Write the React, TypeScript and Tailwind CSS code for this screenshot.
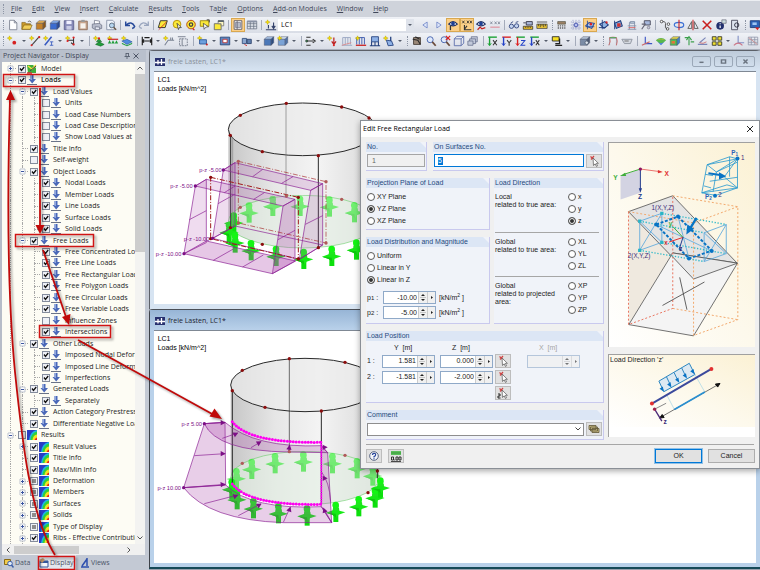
import { useState, type ReactNode } from "react";

/* ---------- toolbar glyphs, drawn on a 14 x 14 grid ---------- */

const spark = <path d="M3 1l1 2 2 .6-2 .8-1 2-.9-2L.3 3.600l1.800-.6z" fill="#f4e000" stroke="#b59a00" strokeWidth=".5" />;
const lens = (
  <g>
    <circle cx="6" cy="5.500" r="3.500" fill="#dfe9fb" stroke="#3c5aa8" />
    <path d="M8.500 8l4 4.500" stroke="#6a4a3a" strokeWidth="2" />
  </g>
);
const eye = (
  <g>
    <path d="M2 6q5-6 10 0-5 4-10 0z" fill="#fff" stroke="#1d2f63" strokeWidth="1.400" />
    <circle cx="7" cy="5.500" r="2.200" fill="#1d3f95" />
  </g>
);
const axis = (up: string, side: string) => (
  <g fill="none" strokeWidth="1.600">
    <path d="M1.500 2.500h10" stroke={side} />
    <path d="M3 2.500v9.500" stroke={up} />
    <path d="M1 9.500l2 3 2-3" stroke={up} strokeWidth="1" />
  </g>
);
const gridLines = (c: string) => (
  <path d="M1.500 2.500h11v9h-11zM1.500 5.500h11M1.500 8.500h11M5 2.500v9M9 2.500v9" fill="none" stroke={c} strokeWidth=".9" />
);
const cube = (a: string, b: string, c: string) => (
  <g stroke="#40475e" strokeWidth=".5">
    <path d="M1.500 5l3-3h8l-3 3z" fill={a} />
    <path d="M1.500 5h8v7h-8z" fill={b} />
    <path d="M9.500 5l3-3v7l-3 3z" fill={c} />
  </g>
);

const glyphs: Record<string, ReactNode> = {
  "New": <path d="M3 1.500h5.500l3 3v8H3zM8.500 1.500v3h3" fill="#fff" stroke="#7b8190" />,
  "Open": <g stroke="#7a5c10" strokeWidth=".7"><path d="M1 12V4h4l1 1.500h5V12z" fill="#c9982c" /><path d="M1 12l2.500-5H13l-2 5z" fill="#f2cf5b" /><path d="M8 3q3-2 4 1" fill="none" stroke="#333" /></g>,
  "Project manager": cube("#e8b050", "#c5822a", "#8d5716"),
  "Block manager": cube("#86aef0", "#3c6cd0", "#264795"),
  "Save": <g><path d="M1.500 2h11v10.500h-11z" fill="#8589b8" stroke="#5b5f8c" /><path d="M4 2h6v4H4z" fill="#eef" /><path d="M4 8h6v4.500H4z" fill="#c8cbe4" /></g>,
  "Clipboard": <g><path d="M2 2.500h10v10H2z" fill="#c8a58c" stroke="#8a6b58" /><path d="M4 5h6v6H4z" fill="#f7f3ee" /><path d="M5 1h4v2.500H5z" fill="#999" /></g>,
  "Print": <g stroke="#666c80" strokeWidth=".8"><path d="M4 1.500l6 1v4H4z" fill="#fff" /><path d="M1.500 6l8-1 3 2v4l-7 1.500-4-2z" fill="#b7bccb" /><path d="M5 9l5 .5v3H5z" fill="#e6e9f3" /></g>,
  "Preview": <g><path d="M2 1.500h7l2 2v9H2z" fill="#eef3fb" stroke="#8790a5" /><circle cx="8" cy="7.500" r="2.800" fill="#b6d5ef" stroke="#567" /><path d="M10 9.500l3 3" stroke="#654" strokeWidth="1.600" /></g>,
  "Undo": <path d="M2 3v4.500h5M2.500 7q6-5.500 10 1.500-.5 2-3 2.500" fill="none" stroke="#274a9a" strokeWidth="1.700" />,
  "Redo": <path d="M12 3v4.500H7M11.500 7q-6-5.500-10 1.500.5 2 3 2.500" fill="none" stroke="#9aa6bf" strokeWidth="1.500" />,
  "Select area": <g><path d="M4 2h8L9.500 10h-8z" fill="#fbe93a" stroke="#222" /><path d="M2 12.500l9-9" stroke="#c22" /></g>,
  "Select circle": <g><circle cx="7" cy="6" r="4.500" fill="#fbe93a" stroke="#b08a00" /><path d="M7 5l5 5-2.300 0-1 2.300z" fill="#fff" stroke="#222" strokeWidth=".8" /></g>,
  "Select ring": <g><circle cx="7" cy="6.500" r="5" fill="#fbe93a" stroke="#b03a00" /><circle cx="7" cy="6.500" r="2" fill="none" stroke="#444" strokeWidth="1.500" /><path d="M9 11l2 2" stroke="#c22" strokeWidth="1.500" /></g>,
  "Select window": <g><path d="M1.500 2h10v6.500h-10z" fill="#fbe93a" stroke="#998300" /><path d="M5 5l1 7 2-2.500 3-.5z" fill="#fff" stroke="#333" strokeWidth=".8" /><path d="M9 1h3v3" fill="none" stroke="#333" /></g>,
  "New window": <g><path d="M1.500 5.500h8v7h-8z" fill="#fbe93a" stroke="#666" /><path d="M6 2h6.500v6H9.500V5.500H6z" fill="#fff8c0" stroke="#777" /><path d="M6 2.500h6.500" stroke="#345" strokeWidth="1.500" /></g>,
  "Navigator": <g><path d="M2.500 2h9v10h-9z" fill="#fff" stroke="#556" /><path d="M4 4h6v6H4z" fill="#b7bcc9" stroke="#778" strokeWidth=".8" /><path d="M6 2v10" stroke="#667" /></g>,
  "Tables": <g>{gridLines("#6a7283")}<path d="M1.500 2h11v2h-11z" fill="#8992a5" /></g>,
  "Load case": <g>{spark}<path d="M10 4v6M8 8l2 3 2-3M1 12.500h12M4 7v4" stroke="#34426b" fill="none" strokeWidth="1.300" /></g>,
  "Previous": <path d="M9.500 3.500L4.500 7l5 3.500z" fill="#dfe7fb" stroke="#7489c8" />,
  "Next": <path d="M4.500 3.500l5 3.500-5 3.500z" fill="#dfe7fb" stroke="#7489c8" />,
  "Show loads": <g>{eye}<path d="M4 8v5" stroke="#333" strokeWidth="1.500" /></g>,
  "Show values": <g><path d="M1.500 2l2.500 3M4 2L1.500 5M5.500 5v.3M7 2l2.200 3M9.200 2L7 5M10.500 2l2.200 3M12.700 2l-2.200 3" stroke="#222" strokeWidth=".9" /><path d="M4 7v5.500h8M4 12l3-4" stroke="#333" fill="none" strokeWidth="1.300" /></g>,
  "Show results": <g>{eye}<path d="M3 12.500l3-3 2 2 4-1.500" stroke="#c21f1f" fill="none" strokeWidth="1.400" /></g>,
  "Result values": <g stroke="#777f90" strokeWidth=".9"><path d="M1.500 3l2.500 3M4 3L1.500 6M6.500 3L9 6M9 3L6.500 6M10.500 3l2.200 3M12.700 3l-2.200 3" /><path d="M1.500 9.500h11" stroke="#d67" /></g>,
  "Visibility": <g fill="#c4d4f0" stroke="#2b3f7a"><circle cx="4" cy="8.500" r="2.500" /><circle cx="10" cy="8" r="2.500" /><path d="M3 5l3-2M9 4l3-1" fill="none" /></g>,
  "Edit model": <g><path d="M1.500 8.500h11v3.500h-11z" fill="#efc22c" stroke="#222" strokeWidth=".8" /><path d="M4 9v1.500M6 9v1.500M8 9v1.500M10 9v1.500" stroke="#222" strokeWidth=".7" /><path d="M5 3h7v4H5z" fill="#aab7d8" stroke="#334" /><path d="M1.500 4.500h3" stroke="#334" /></g>,
  "Measure": <g><path d="M1 6h12v5H1z" fill="#f0c93a" stroke="#333" strokeWidth=".8" /><path d="M3 6v2.500M5 6v3.500M7 6v2.500M9 6v3.500M11 6v2.500M1 3.500h12" stroke="#222" strokeWidth=".8" /></g>,
  "Options": <g><path d="M2 3h9v3H2z" fill="#a08468" stroke="#443" strokeWidth=".7" /><path d="M2 8h10M2 10.500h10" stroke="#666" strokeDasharray="1.500 1" strokeWidth="1.500" /></g>,
  "Grid": <g><path d="M1 3.500h12M1 7h12M1 10.500h12M3.500 1v12M7 1v12M10.500 1v12" stroke="#8890c0" strokeWidth=".8" strokeDasharray="1.500 1" /><circle cx="7" cy="7" r="2.200" fill="#b9c2ee" stroke="#3c48a8" /></g>,
  "Snap": <g><path d="M2 8l4-4 6 1-3 6z" fill="#9fc3ef" stroke="#274a9a" strokeWidth="1.200" /><path d="M4 2v10M2 9h10" stroke="#274a9a" /><circle cx="8" cy="6" r="1.500" fill="#d22" /></g>,
  "Snap line": <g><path d="M2 6l6-3 4 4-5 4z" fill="#8fb4e3" stroke="#1f3c7c" strokeWidth="1.200" /><path d="M5 1v11M1 10h8" stroke="#1f3c7c" /><circle cx="10" cy="4" r="1.300" fill="#d22" /></g>,
  "Snap face": <g><path d="M3 5l7-3 2 6-7 3z" fill="#7ea7dd" stroke="#1f3c7c" strokeWidth="1.200" /><path d="M6 5h4v4H6z" fill="#d23232" /><path d="M3 2v10" stroke="#1f3c7c" /></g>,
  "Guide": <g stroke="#8290a8" fill="none"><path d="M2 12h10M4 12V4h6v8M2 8h10" /><path d="M5 3h5v2H5z" fill="#bcd" /><path d="M3 10h8" stroke="#d66" /></g>,
  "Layers": <g><path d="M5 2h7v5H5z" fill="#a7b8dd" stroke="#445" /><path d="M2 12l4-6M2 6h5" stroke="#667" strokeWidth="1.300" /><circle cx="10" cy="10" r="1.500" fill="#ccd" stroke="#667" strokeWidth=".7" /></g>,
  "Move": <g fill="#fff" stroke="#444"><circle cx="3" cy="3" r="1.500" /><circle cx="11" cy="6" r="1.500" /><circle cx="10" cy="11.500" r="1.500" /><path d="M4.500 3q4 0 3 4t2 4.500" fill="none" /></g>,
  "Rotate": <g fill="none"><ellipse cx="7" cy="7" rx="5.500" ry="3" stroke="#3b6fd4" strokeWidth="1.400" /><path d="M7 1v12" stroke="#c22" strokeWidth="1.300" /></g>,
  "Mirror": <g fill="none" stroke="#555"><path d="M5.500 3v8H1zM8.500 3v8H13z" fill="#e5e8ee" /><path d="M7 1v12" stroke="#c22" strokeWidth="1.200" /></g>,
  "Delete": <path d="M2 2l10 10M12 2L2 12" stroke="#c81e1e" strokeWidth="1.800" />,
  "Info": <g><circle cx="6" cy="8" r="4.500" fill="#22306e" /><path d="M6 7.500v3M6 5v1" stroke="#fff" strokeWidth="1.400" /><path d="M8 1h5v4H8z" fill="#cdd" stroke="#556" strokeWidth=".7" /></g>,
  "Inspect": <g><path d="M3 1.500h7v11H3z" fill="#dde3ee" stroke="#445" /><circle cx="9" cy="7" r="2.500" fill="none" stroke="#223" /></g>,
  "Display": <g><path d="M1.500 2h11v8h-11z" fill="#2d62b6" stroke="#1c3c78" /><path d="M4 4h5v3H4z" fill="#9fc6f4" /><path d="M7 10l3 3 2-3z" fill="#d22" /></g>,

  "Node": <g>{spark}<circle cx="8.500" cy="9" r="2.200" fill="#d62222" /></g>,
  "Line": <g>{spark}<path d="M3 12L12 2" stroke="#444" strokeWidth="1.300" /><circle cx="3" cy="12" r="1.200" fill="#d22" /><circle cx="12" cy="2.500" r="1.200" fill="#d22" /></g>,
  "Member": <g>{spark}<path d="M2 12l8-10" stroke="#3a5cc0" strokeWidth="1.800" /><path d="M8 8h4M10 8v4M8 12h4" stroke="#3a5cc0" /></g>,
  "Polyline": <g>{spark}<path d="M3 6h7v-3M10 3v8L7 9" stroke="#333" fill="none" strokeWidth="1.200" /><circle cx="3" cy="7" r="1.300" fill="#d22" /><circle cx="10" cy="11" r="1.300" fill="#d22" /><circle cx="10" cy="3" r="1.300" fill="#d22" /></g>,
  "Support": <g>{spark}<path d="M7 4l3 4H4zM3 11l4-3 6 3-4 2z" fill="#1f9e3a" stroke="#0d5c1e" strokeWidth=".6" /><circle cx="7" cy="4" r="1.300" fill="#d22" /></g>,
  "Line support": <g>{spark}<path d="M1 5h12" stroke="#c22" strokeWidth="1.400" /><path d="M3 6l2 4H1zM11 6l2 4H9zM7 6l2 4H5z" fill="#1f9e3a" /></g>,
  "Surface support": <g>{spark}<path d="M1 7l6-2 6 3-6 3z" fill="#4f8be0" stroke="#224a91" strokeWidth=".6" /><path d="M1 9l6 3 6-3v1.500L7 13l-6-2.500z" fill="#22a040" /></g>,
  "Dimension": <path d="M1.500 2v10M12.500 3v9M1.500 7h11M3.500 5l-2 2 2 2M10.500 5l2 2-2 2M4 3h6" fill="none" stroke="#1d1d1d" strokeWidth="1.300" />,
  "Coordinates": <g>{spark}<path d="M2 12l4-6h7M9 3v3M11 3v3" stroke="#7a8292" fill="none" strokeWidth="1.200" /></g>,
  "Frame": <g stroke="#6d7584" fill="none"><path d="M3 4.500h9v8H3z" strokeDasharray="2 1" /><path d="M1 2h9M6 4v8" /></g>,
  "Surface": <g>{spark}<path d="M3 5.500h8v5H3z" fill="#6da0de" stroke="#2c5594" /><circle cx="11.500" cy="11" r="1.200" fill="#c22" /></g>,
  "Opening": <g><path d="M1.500 2.500h11v9h-11z" fill="#5d86c2" stroke="#2a4676" /><path d="M4.500 5h5v4h-5z" fill="#fff" stroke="#b33" /></g>,
  "Solid": <g><path d="M1.500 4h5v6h-5z" fill="#8ba7cf" stroke="#334e7c" /><path d="M7 5h5v5H7z" fill="#5f7fae" stroke="#2c426a" /><path d="M4 11l3 1.500" stroke="#c22" /></g>,
  "Solid body": cube("#a8c2e6", "#4b78b8", "#2d4d80"),
  "Box": <g>{cube("#d5e2f5", "#7ba3d6", "#4e72a6")}{spark}</g>,
  "Connect": <g stroke="#333" fill="none"><path d="M1.500 2.500h5M1.500 7h8M1.500 12h5M9 5l3 2-3 2" strokeWidth="1.200" /><circle cx="2" cy="7" r="1.200" fill="#3a5" /></g>,
  "Nodal load": <g>{spark}<path d="M8 3v7M5.500 7.500L8 11l2.500-3.500" stroke="#b22" fill="none" strokeWidth="1.400" /><circle cx="8" cy="12" r="1.200" fill="#d22" /></g>,
  "Member load": <g stroke="#95a3c0" fill="none"><path d="M2 3h9M2 3v8M5 3v8M8 3v8M11 3v8M1 12h12" /><path d="M1 12l11-3" stroke="#d88" /></g>,
  "Line load": <g stroke="#2f4fa8" fill="none"><path d="M2 3h9M2 3v8M5 3v8M8 3v8M11 3v8" /><path d="M1 12h12" stroke="#c22" strokeWidth="1.500" />{spark}</g>,
  "Surface load": <g><path d="M3 2h8v6H3z" fill="#8eb1e6" stroke="#23407e" /><path d="M3 8v4M7 8v4M11 8v4M1 12.500h12" stroke="#23407e" strokeWidth="1.200" /></g>,
  "Free load": <g>{spark}<path d="M4 6l6 1 2 5-6 .5z" fill="#8eb1e6" stroke="#23407e" /><path d="M9 2v5" stroke="#23407e" strokeWidth="1.500" /></g>,
  "Pan": <g><path d="M3 3h8v8H3z" fill="#9b8878" stroke="#443a34" /><path d="M2 5l6 1 3 5M5 2l5 3" stroke="#2a2a2a" strokeWidth="1.300" fill="none" /></g>,
  "Zoom": lens,
  "Zoom out": <g>{lens}<path d="M8 1l5 5M13 1L8 6" stroke="#d22" strokeWidth="1.500" /></g>,
  "Wireframe": <g fill="none" stroke="#5669a8"><path d="M1.500 4.500h8v8h-8zM1.500 4.500l3-3h8v8l-3 3M9.500 4.500l3-3" /></g>,
  "Boxes": <g fill="#c2c9da" stroke="#5d6786" strokeWidth=".8"><path d="M5 2h7v6H5z" /><path d="M3 4.500h7V10H3z" /><path d="M1 7h6v5H1z" /></g>,
  "View X": <g>{axis("#1aa233", "#1aa233")}<path d="M7 6l4.500 6M11.500 6L7 12" stroke="#333" strokeWidth="1.200" /></g>,
  "View Y": <g>{axis("#2443c8", "#d22")}<path d="M7 6l2.500 3L12 6M9.500 9v3.500" stroke="#333" fill="none" strokeWidth="1.200" /></g>,
  "View Z": <g>{axis("#d22", "#1aa233")}<path d="M7 6.500h4.500L7 12h5" stroke="#2443c8" fill="none" strokeWidth="1.200" /></g>,
  "View -X": <g>{axis("#2443c8", "#1aa233")}<path d="M5 9h2M8 6l4 6M12 6l-4 6" stroke="#333" fill="none" strokeWidth="1.200" /></g>,
  "Isometric": <g><path d="M1.500 2h8v5h-8z" fill="#f7df22" stroke="#222" /><path d="M10 4v6H5M5 12h8" stroke="#222" fill="none" strokeWidth="1.500" /></g>,
  "Render": <g>{cube("#b9c6d8", "#7b8ca6", "#4c5a73")}<circle cx="9" cy="9" r="2" fill="#dfe6f0" stroke="#4a566a" strokeWidth=".8" /></g>,
  "Deform": <g fill="none"><path d="M3 12V4h8v8" stroke="#98a0ae" /><path d="M2 12q3-4 1-9 4-1 8 0 2 4 0 9" stroke="#c66" /><path d="M3 3h8" stroke="#4a5" /></g>,
  "Forces": <g><path d="M1 5h12l-2 5H4z" fill="#d3d7de" stroke="#8a909c" /><path d="M4 7h5" stroke="#666" /></g>,
  "Axes": <g fill="none"><path d="M5 2v8h8" stroke="#3b55c5" strokeWidth="1.300" /><path d="M1 12l9-4" stroke="#c66" strokeWidth="1.300" /></g>,
  "Contour": <g><path d="M1 6q6-5 12 0-6 7-12 0z" fill="#58b84e" /><path d="M2 6q5-3.500 10 0l-5-1z" fill="#e8b92c" /><path d="M3 8q4 3 8 0l-4 4z" fill="#457bd8" /></g>,
  "Solid result": <g>{cube("#e3d64c", "#57b857", "#3c83c9")}<path d="M3 7h4v3H3z" fill="#e2763a" /></g>,
  "Reactions": <g fill="none" stroke="#3ca04c" strokeWidth="1.300"><path d="M7 12V4M4 6l3-4 3 4M2 3h4M9 8h4" /></g>,
  "Section": <g fill="none"><path d="M1 11h11M3 9l7-6" stroke="#7a86b8" strokeWidth="1.300" /><path d="M3 9q4 2 8-1" stroke="#d07070" /></g>,
  "Panels": <g fill="#f0e030" stroke="#33352a"><path d="M1.500 2h4.500v4H1.500zM8 2h4.500v4H8zM1.500 8h4.500v4H1.500zM8 8h4.500v4H8z" /></g>,
  "Smooth": <g fill="none"><path d="M6 1v8h7" stroke="#8290c5" strokeWidth="1.300" /><path d="M1 12q5-5 10 0" stroke="#c78" strokeWidth="1.300" /></g>,
  "Result table": <g>{gridLines("#8d93a6")}<path d="M2 3l10 8" stroke="#c88" /></g>,
};

/* "|" separator, ":" grip, "v" drop arrow, "[name]" pressed button */
const rowOneLeft = ["New", "Open", "Project manager", "Block manager", "Save", "Clipboard", "Print", "Preview", "|", "Undo", "Redo", "|", "Select area", "Select circle", "Select ring", "Select window", "New window", "|", "[Navigator]", "Tables", "|", "Load case"];
const rowOneRight = ["Previous", "Next", "[Show loads]", "[Show values]", "Show results", "Result values", "|", "Visibility", "Edit model", "Measure", ":", "Options", "Grid", "[Snap]", "Snap line", "Snap face", "Guide", "Layers", "|", "Move", "Rotate", "Mirror", "Delete", "Info", "Inspect", ":", "Display"];
const rowTwo = ["Node", "v", "Line", "Member", "v", "Polyline", "v", "|", "Support", "Line support", "Surface support", "|", "Dimension", "v", "Coordinates", "Frame", "|", "Surface", "v", "Opening", "v", "Solid", "v", "Solid body", "Box", "v", "|", "Connect", "v", "Nodal load", "Member load", "Line load", "Surface load", "Free load", "v", ":", "Pan", "Zoom", "Zoom out", "Wireframe", "Boxes", "|", "View X", "View Y", "View Z", "View -X", "v", "Isometric", "v", "|", "Render", "v", ":", "Deform", "Forces", "|", "Axes", "Contour", "Solid result", "Reactions", "Section", "Panels", "v", "Smooth", "Result table"];

function Grip() {
  return (
    <span className="flex w-1.5 shrink-0 justify-center">
      <span className="h-2.5 border-l border-dotted border-[#8d95a5]" />
    </span>
  );
}

function Tools({ items, wide = false }: { items: string[]; wide?: boolean }) {
  return (
    <>
      {items.map((it, i) => {
        if (it === "|")
          return (
            <span key={i} className={`flex shrink-0 justify-center ${wide ? "w-1.5" : "w-[5px]"}`}>
              <span className="h-2.5 border-l border-[#a4abba]" />
            </span>
          );
        if (it === ":") return <Grip key={i} />;
        if (it === "v")
          return (
            <button key={i} aria-label="More" className="flex w-2 shrink-0 items-center justify-center">
              <svg viewBox="0 0 4 2" className="h-[2px] w-1"><path d="M0 0h4L2 2z" fill="#555c6b" /></svg>
            </button>
          );
        const on = it.startsWith("[");
        const name = on ? it.slice(1, -1) : it;
        return (
          <button
            key={i}
            aria-label={name}
            className={`flex h-[14px] w-[14px] shrink-0 items-center justify-center ${on ? "border border-[#d9a850] bg-[#fbcf88]" : ""}`}
          >
            <svg viewBox="0 0 14 14" className="h-3 w-3 shrink-0">{glyphs[name]}</svg>
          </button>
        );
      })}
    </>
  );
}

const menu: [string, string, string][] = [
  ["", "F", "ile"], ["", "E", "dit"], ["", "V", "iew"], ["", "I", "nsert"], ["", "C", "alculate"], ["", "R", "esults"],
  ["", "T", "ools"], ["Ta", "b", "le"], ["", "O", "ptions"], ["", "A", "dd-on Modules"], ["", "W", "indow"], ["", "H", "elp"],
];

/* ---------- navigator tree ---------- */

type Row = { l: 0 | 1 | 2; t: string; c: 0 | 1 | 2; x?: "+" | "-"; k?: "model" | "result" };
const tree: Row[] = [
  { l: 0, t: "Model", c: 1, x: "+", k: "model" },
  { l: 0, t: "Loads", c: 1, x: "-" },
  { l: 1, t: "Load Values", c: 1, x: "-" },
  { l: 2, t: "Units", c: 0 },
  { l: 2, t: "Load Case Numbers", c: 0 },
  { l: 2, t: "Load Case Description", c: 0 },
  { l: 2, t: "Show Load Values at", c: 0 },
  { l: 1, t: "Title Info", c: 1 },
  { l: 1, t: "Self-weight", c: 0 },
  { l: 1, t: "Object Loads", c: 1, x: "-" },
  { l: 2, t: "Nodal Loads", c: 1 },
  { l: 2, t: "Member Loads", c: 1 },
  { l: 2, t: "Line Loads", c: 1 },
  { l: 2, t: "Surface Loads", c: 1 },
  { l: 2, t: "Solid Loads", c: 1 },
  { l: 1, t: "Free Loads", c: 1, x: "-" },
  { l: 2, t: "Free Concentrated Loads", c: 1 },
  { l: 2, t: "Free Line Loads", c: 1 },
  { l: 2, t: "Free Rectangular Loads", c: 1 },
  { l: 2, t: "Free Polygon Loads", c: 1 },
  { l: 2, t: "Free Circular Loads", c: 1 },
  { l: 2, t: "Free Variable Loads", c: 1 },
  { l: 2, t: "Influence Zones", c: 0 },
  { l: 2, t: "Intersections", c: 1 },
  { l: 1, t: "Other Loads", c: 1, x: "-" },
  { l: 2, t: "Imposed Nodal Deformations", c: 1 },
  { l: 2, t: "Imposed Line Deformations", c: 1 },
  { l: 2, t: "Imperfections", c: 1 },
  { l: 1, t: "Generated Loads", c: 1, x: "-" },
  { l: 2, t: "Separately", c: 1 },
  { l: 1, t: "Action Category Prestress", c: 1 },
  { l: 1, t: "Differentiate Negative Loads", c: 1 },
  { l: 0, t: "Results", c: 0, x: "-", k: "result" },
  { l: 1, t: "Result Values", c: 1, x: "+", k: "result" },
  { l: 1, t: "Title Info", c: 1, k: "result" },
  { l: 1, t: "Max/Min Info", c: 1, k: "result" },
  { l: 1, t: "Deformation", c: 2, x: "+", k: "result" },
  { l: 1, t: "Members", c: 2, x: "+", k: "result" },
  { l: 1, t: "Surfaces", c: 2, x: "+", k: "result" },
  { l: 1, t: "Solids", c: 2, x: "+", k: "result" },
  { l: 1, t: "Type of Display", c: 2, x: "+", k: "result" },
  { l: 1, t: "Ribs - Effective Contribution", c: 1, x: "+", k: "result" },
];

function TreeIcon({ kind }: { kind?: "model" | "result" }) {
  return (
    <svg viewBox="0 0 10 10" className="h-2.5 w-2.5 shrink-0">
      {kind === "model" && (
        <g>
          <path d="M0 1h6l3 3v5H1z" fill="#3fae3a" />
          <path d="M1 2l4 3 4-4" stroke="#f5e13a" strokeWidth="1.500" fill="none" />
          <path d="M3 7l6-5" stroke="#444" />
          <path d="M0 9h5" stroke="#c33" strokeWidth="1.500" />
        </g>
      )}
      {kind === "result" && (
        <g>
          <path d="M0 0h10v10H0z" fill="#2a3cc4" />
          <path d="M10 0Q3 1 2 10h8z" fill="#19b4e8" />
          <path d="M10 1.500Q4 3 3.500 10H10z" fill="#2fd03c" />
          <path d="M10 4.500Q6 5 5.500 10H10z" fill="#f3e324" />
          <path d="M10 7.500Q8 8 7.500 10H10z" fill="#e8261c" />
        </g>
      )}
      {!kind && (
        <g>
          <path d="M3.500 0h3v4H9L5.200 8.500 1.500 4h2z" fill="#4a68b8" />
          <path d="M3.500 0h1.500v5H3.500z" fill="#8fa6de" />
          <path d="M0 9.500h10" stroke="#6a7388" />
        </g>
      )}
    </svg>
  );
}

function TreeRow({ row }: { row: Row }) {
  const [on, setOn] = useState(row.c === 1);
  return (
    <li className="flex min-h-0 flex-1 items-center pl-0.5">
      {Array.from({ length: row.l }, (_, i) => (
        <span key={i} className="flex w-3 shrink-0 justify-center self-stretch">
          <span className="border-l border-dotted border-[#a8a8a8]" />
        </span>
      ))}
      <span className="grid w-3 shrink-0 place-items-center self-stretch">
        <span className="col-start-1 row-start-1 h-full border-l border-dotted border-[#a8a8a8]" />
        <span className="col-start-1 row-start-1 ml-1.5 w-1.5 border-t border-dotted border-[#a8a8a8]" />
        {row.x && (
          <svg viewBox="0 0 7 7" className="col-start-1 row-start-1 h-[7px] w-[7px]">
            <path d="M1 1h5v5H1z" fill="#fff" stroke="#bfc5d0" />
            <path d={row.x === "+" ? "M2 3.500h3M3.500 2v3" : "M2 3.500h3"} stroke="#3b55a0" />
          </svg>
        )}
      </span>
      <label className="flex min-w-0 items-center pl-0.5">
        <span className="mr-px grid shrink-0 place-items-center">
          <input
            type="checkbox"
            checked={on}
            onChange={(e) => setOn(e.target.checked)}
            className="col-start-1 row-start-1 h-2 w-2 appearance-none border border-[#848c9c] bg-[#eef0f6]"
          />
          {on && (
            <svg viewBox="0 0 8 8" className="pointer-events-none col-start-1 row-start-1 h-2 w-2">
              <path d="M2 3.500l1.500 2L6.200 2" fill="none" stroke="#111" strokeWidth="1.300" />
            </svg>
          )}
          {!on && row.c === 2 && <span className="pointer-events-none col-start-1 row-start-1 h-1 w-1 bg-[#8d8d8d]" />}
        </span>
        <TreeIcon kind={row.k} />
        <span className={`pl-1 whitespace-nowrap ${row.t === "Loads" ? "font-semibold" : ""}`}>{row.t}</span>
      </label>
    </li>
  );
}

function Navigator() {
  return (
    <aside className="flex w-[146px] shrink-0 flex-col border-l-2 border-[#b6bcc8] bg-[#c3c9d4]">
      <header className="flex h-3 items-center bg-[#b9c0cc] pr-1 pl-px text-[#3e4554]">
        <h2 className="flex-1 whitespace-nowrap">Project Navigator - Display</h2>
        <button aria-label="Pin" className="w-[9px]">
          <svg viewBox="0 0 6 6" className="h-1.5 w-1.5"><path d="M2 0v3.500M4.500 0v3.500M2 .5h2.500M.5 3.500H6M3 3.500V6" stroke="#4d5566" strokeWidth=".8" fill="none" /></svg>
        </button>
        <button aria-label="Close" className="w-[9px]">
          <svg viewBox="0 0 6 6" className="h-1.5 w-1.5"><path d="M.5.5l5 5M5.500.5l-5 5" stroke="#4d5566" /></svg>
        </button>
      </header>
      <div className="mr-px flex min-h-0 flex-1 bg-[#fdfcf4]">
        <ul className="flex min-w-0 flex-1 flex-col overflow-hidden pt-px text-[#1c1c1c]">
          {tree.map((r, i) => <TreeRow key={i} row={r} />)}
        </ul>
        <div className="flex w-2.5 shrink-0 flex-col items-center bg-[#f3f3f1]">
          <svg viewBox="0 0 6 4" className="my-1 h-1 w-1.5"><path d="M.5 3.500L3 1l2.500 2.500" fill="none" stroke="#555" /></svg>
          <div className="h-[178px] w-full bg-[#cdcdcd]" />
          <svg viewBox="0 0 6 4" className="mt-auto mb-1 h-1 w-1.5"><path d="M.5.5L3 3 5.500.5" fill="none" stroke="#555" /></svg>
        </div>
      </div>
      <div className="mr-px flex h-[11px] items-center bg-[#f0f0f0] pr-3.5 pl-1">
        <svg viewBox="0 0 4 6" className="h-1.5 w-1"><path d="M3.500.5L1 3l2.500 2.500" fill="none" stroke="#555" /></svg>
        <div className="ml-1 h-2 w-[65px] bg-[#cdcdcd]" />
        <svg viewBox="0 0 4 6" className="ml-auto h-1.5 w-1"><path d="M.5.5L3 3 .5 5.500" fill="none" stroke="#555" /></svg>
      </div>
      <nav className="flex h-[15px] items-center text-[#4a5468]">
        <button className="flex h-full w-9 items-center gap-px pl-0.5">
          <svg viewBox="0 0 10 10" className="h-2.5 w-2.5"><path d="M.5 1.500h6v5h-6z" fill="#f3cd4d" stroke="#8a6a14" /><circle cx="6" cy="5.500" r="2.300" fill="#dceafa" stroke="#3a5ca8" /><path d="M7.500 7l2 2.500" stroke="#3a5ca8" strokeWidth="1.500" /></svg>
          Data
        </button>
        <button className="flex h-full w-[38px] items-center gap-px bg-[#e3e7ee] pl-px">
          <svg viewBox="0 0 10 10" className="h-2.5 w-2.5"><path d="M1 3h8v6H1z" fill="#f4f6fb" stroke="#35589c" /><path d="M1 3h8v2H1z" fill="#35589c" /><path d="M0 2l4-2 2 2-3 3z" fill="#c79a6c" /></svg>
          Display
        </button>
        <button className="flex h-full items-center gap-px pl-1">
          <svg viewBox="0 0 10 10" className="h-2.5 w-2.5"><path d="M7 0v8M7 1L2 8M1 9h8" stroke="#2d4fae" strokeWidth="1.500" fill="none" /></svg>
          Views
        </button>
      </nav>
    </aside>
  );
}

/* ---------- model views (three drawing units per pixel) ---------- */

function Anchor({ x, y, dim }: { x: number; y: number; dim?: boolean }) {
  return (
    <g transform={`translate(${x} ${y})`} opacity={dim ? 0.55 : 1}>
      <path d="M-7 8H8v22H-7z" fill="#0ce00c" />
      <path d="M-29 2L-9-5-8-12 10-12 11-4 29 1 9 8 2 18-9 9z" fill="#16ea16" />
      <path d="M-29 2L0 5 2 18-9 9z" fill="#0ec80e" />
      <path d="M-8-20H9v16H-8z" fill="#1fe61f" />
      <circle cy="-21" r="10" fill="#14f514" />
    </g>
  );
}

function Dots({ pts, r = 5, fill = "#8c0d0d" }: { pts: number[][]; r?: number; fill?: string }) {
  return <>{pts.map(([x, y]) => <circle key={`${x},${y}`} cx={x} cy={y} r={r} fill={fill} />)}</>;
}

const shell = (
  <linearGradient id="shell" x1="0" x2="1">
    <stop offset="0" stopColor="#c6c6c6" />
    <stop offset=".3" stopColor="#e6e6e6" />
    <stop offset=".6" stopColor="#f4f4f4" />
    <stop offset="1" stopColor="#d8d8d8" />
  </linearGradient>
);

function ViewOne() {
  return (
    <svg viewBox="27 63 1803 699" className="h-[233px] w-[601px] shrink-0">
      <defs>{shell}</defs>
      <g fontFamily="'Liberation Sans', Arial, sans-serif" fontSize="21" fill="#000">
        <text x="38" y="94">LC1</text>
        <text x="38" y="121">Loads [kN/m^2]</text>
      </g>
      <path d="M250 235A223 79 0 0 1 696 235V512A223 79 0 0 1 250 512z" fill="url(#shell)" />
      <ellipse cx="473" cy="235" rx="223" ry="79" fill="#ececec" opacity=".7" />
      <ellipse cx="473" cy="512" rx="223" ry="79" fill="#e4f0e4" opacity=".6" stroke="#2fc02f" strokeWidth="2" />
      {[[312, 485], [383, 465], [465, 465], [553, 467], [628, 484]].map(([x, y]) => <Anchor key={x} x={x} y={y} dim />)}
      {[[266, 515], [252, 543], [270, 575], [318, 598], [393, 615], [476, 624], [560, 615], [634, 596], [690, 560]].map(([x, y]) => <Anchor key={x} x={x} y={y} />)}
      <g fill="none" stroke="#2a2a2a" strokeWidth="3">
        <ellipse cx="473" cy="235" rx="223" ry="79" />
        <path d="M423 157v280" stroke="#777" strokeWidth="2" />
        <path d="M257 253v278M520 314v276" />
        <path d="M263 257v270" stroke="#888" strokeWidth="2" />
      </g>
      <g fill="#b050b0" fillOpacity=".2" stroke="#8a1c92" strokeWidth="2">
        <path d="M235 357l35-22 263 63-36 20z" />
        <path d="M235 357l35-22v190l-67 37z" />
        <path d="M497 418l36-20v184l-70 43z" />
        <path d="M151 405l33-20 266 60-36 20z" />
        <path d="M151 405l33-20v190l-67 33z" />
        <path d="M414 465l36-20v185l-68 38z" fillOpacity=".32" />
        <path d="M117 608l67-38 268 60-70 38z" fillOpacity=".32" />
        <path d="M203 562l67-37 263 57-70 43z" fill="none" />
      </g>
      <g fill="none" stroke="#8a1c92" strokeWidth="2">
        <path d="M133 506l51-27M219 458l50-28M205 628l60-34M293 648l62-36M238 425l32-20M326 445l32-20M323 377l30-22M410 397l34-20M399 566l51-28M481 520l52-26" />
      </g>
      <g fill="none" stroke="#a01818" strokeWidth="3" strokeDasharray="15 5 3 5">
        <path d="M197 379l263 60v185l-263-61z" />
        <path d="M280 331l263 61v184l-263-60z" opacity=".6" />
      </g>
      <Dots pts={[[256, 253], [286, 193], [352, 302], [424, 157], [520, 314], [590, 168], [672, 201], [256, 530], [197, 379], [460, 439], [460, 624], [197, 563], [520, 590], [352, 580]]} />
      <Dots pts={[[280, 331], [543, 392], [543, 576], [280, 516], [286, 469], [424, 435], [590, 445]]} fill="#b05a5a" />
      <Dots pts={[[151, 405], [117, 608], [235, 357], [203, 562]]} fill="#7d0f86" />
      <g fontFamily="'Liberation Sans', Arial, sans-serif" fontSize="17" fill="#7d0f86" textAnchor="end">
        <text x="230" y="364">p-z -5.00</text>
        <text x="143" y="412">p-z -5.00</text>
        <text x="193" y="569">p-z -10.00</text>
        <text x="109" y="615">p-z -10.00</text>
      </g>
    </svg>
  );
}

function ViewTwo() {
  const heads: [number, number, number][] = [[240, 353, 0], [278, 384, -25], [348, 410, -30], [434, 421, -80], [546, 427, 0], [240, 446, 0], [240, 538, -5], [278, 571, -20], [348, 597, -30], [436, 607, -70], [546, 520, 0], [536, 610, -110]];
  return (
    <svg viewBox="27 78 1803 693" className="h-[231px] w-[601px] shrink-0">
      <g fontFamily="'Liberation Sans', Arial, sans-serif" fontSize="21" fill="#000">
        <text x="38" y="107">LC1</text>
        <text x="38" y="134">Loads [kN/m^2]</text>
      </g>
      <path d="M257 240A223 80 0 0 1 703 240V519A223 80 0 0 1 257 519z" fill="url(#shell)" />
      <ellipse cx="480" cy="240" rx="223" ry="80" fill="#ececec" opacity=".7" />
      <ellipse cx="480" cy="519" rx="223" ry="80" fill="#e4f0e4" opacity=".6" stroke="#2fc02f" strokeWidth="2" />
      {[[320, 492], [390, 475], [475, 470], [562, 475], [636, 490], [683, 512], [274, 520]].map(([x, y]) => <Anchor key={x} x={x} y={y} dim />)}
      {[[260, 552], [276, 583], [325, 610], [400, 625], [486, 632], [572, 621], [641, 604], [690, 578], [706, 548]].map(([x, y]) => <Anchor key={x} x={x} y={y} />)}
      <g fill="none" stroke="#2a2a2a" strokeWidth="3">
        <ellipse cx="480" cy="240" rx="223" ry="80" />
        <path d="M433 161v282" strokeWidth="2" />
        <path d="M262 257v280M529 318v280M697 270v250" />
      </g>
      <g fill="#a33aa3" fillOpacity=".25" stroke="#8a1c92" strokeWidth="2">
        <path d="M178 356l62-4 2 188-126 8z" />
        <path d="M178 356Q215 438 430 441L548 443 529 422Q330 430 240 352z" />
        <path d="M116 548Q190 645 415 653H560L529 605Q320 615 242 540z" />
        <path d="M529 422l19 21 12 210-31-48z" />
      </g>
      <g fill="none" stroke="#8a1c92" strokeWidth="2">
        <path d="M178 356l62-4M232 400l46-16M318 428l30-18M430 440l4-20M148 452l92-6M116 548l124-10M178 596l100-26M280 632l68-36M415 652l21-46M560 652l-26-44M529 500q24 30 28 90" />
      </g>
      {heads.map(([x, y, a], i) => <path key={i} d="M2 0l-15-8v16z" transform={`translate(${x} ${y}) rotate(${a})`} fill="#7d0f86" />)}
      <g fill="none" stroke="#ff00f2" strokeLinecap="round" strokeWidth="9">
        <path d="M262 350Q310 415 529 412" strokeDasharray="0 9" />
        <path d="M262 537Q310 602 529 598" strokeDasharray="0 9" />
        <path d="M529 412v186" strokeWidth="6" strokeDasharray="0 7" />
      </g>
      <Dots pts={[[262, 257], [292, 196], [360, 307], [433, 161], [529, 318], [600, 172], [697, 498], [669, 563]]} />
      <Dots pts={[[292, 475], [433, 440], [600, 451]]} fill="#b05a5a" />
      <Dots pts={[[178, 356], [116, 548]]} fill="#7d0f86" />
      <g fontFamily="'Liberation Sans', Arial, sans-serif" fontSize="17" fill="#7d0f86" textAnchor="end">
        <text x="171" y="364">p-z 5.00</text>
        <text x="108" y="555">p-z 10.00</text>
      </g>
    </svg>
  );
}

function ChildWindow({ active = false, children }: { active?: boolean; children: ReactNode }) {
  return (
    <section
      className={`flex min-h-0 flex-1 flex-col rounded-t-sm border-t border-l px-1 ${
        active
          ? "border-b-2 border-t-[#4a4f57] border-b-[#164a58] border-l-[#3d4148] bg-[#b9d1ea] pb-1"
          : "border-[#5c6068] bg-[#d7e4f2] pb-[5px]"
      }`}
    >
      <header
        className={`-mx-1 flex h-5 shrink-0 items-center gap-[3px] bg-linear-to-b px-[5px] pt-px ${
          active ? "from-[#97b5d6] to-[#b9d1ea] text-[#1c2530]" : "from-[#becbda] to-[#d7e4f2] text-[#8a919b]"
        }`}
      >
        <svg viewBox="0 0 10 8" className="h-2 w-2.5"><path d="M0 0h10v8H0z" fill="#27306e" /><path d="M0 4.500h10M3 2v4.500M6.500 1v6" stroke="#fff" strokeWidth="1.300" /></svg>
        <h3 className="flex-1 text-[7px]">freie Lasten, LC1*</h3>
        {["M7 6.500h5", "M7 3.500h5v4H7z", "M7 3l5 5M12 3L7 8"].map((d, i) => (
          <button key={i} aria-label={["Minimize", "Maximize", "Close"][i]} className="h-[11px] w-[19px] rounded-[2px] border border-[#9ba8b8]">
            <svg viewBox="0 0 19 11" className="h-[9px] w-[17px]"><path d={d} fill="none" stroke="#6b7480" strokeWidth="1.800" /></svg>
          </button>
        ))}
      </header>
      <div className="flex min-h-0 flex-1 overflow-hidden border-t border-[#7f8894] bg-white">{children}</div>
    </section>
  );
}

/* ---------- dialog ---------- */

function Group({ title, className = "", children }: { title: string; className?: string; children: ReactNode }) {
  return (
    <fieldset className={`flex min-w-0 flex-col border-r border-b border-[#c9c9ee] bg-[#f0f3f9] ${className}`}>
      <legend className="contents">
        <span className="flex h-2.5 shrink-0 items-center bg-[#dce6f5] pl-px text-[#1f497d] [clip-path:polygon(0_0,calc(100%-6px)_0,100%_6px,100%_100%,0_100%)]">
          {title}
        </span>
      </legend>
      {children}
    </fieldset>
  );
}

function Radio({ name, label, checked }: { name: string; label: string; checked?: boolean }) {
  return (
    <label className="flex h-3 items-center gap-0.5">
      <input
        type="radio"
        name={name}
        defaultChecked={checked}
        className="h-2 w-2 shrink-0 appearance-none rounded-full border border-[#5a5a5a] bg-white checked:bg-[#333] checked:shadow-[inset_0_0_0_1px_white]"
      />
      {label}
    </label>
  );
}

function Spinner({ label, value, disabled }: { label: string; value: string; disabled?: boolean }) {
  return (
    <span className={`flex h-[13px] w-[53px] shrink-0 border border-[#8fa9c8] ${disabled ? "bg-[#f0f0f0] opacity-60" : "bg-white"}`}>
      <input aria-label={label} defaultValue={value} disabled={disabled} className="w-[34px] pr-px text-right outline-none" />
      <button aria-label={`${label} step`} disabled={disabled} className="w-[9px] border-l border-[#ccc] bg-[#f0f0f0]">
        <svg viewBox="0 0 8 11" className="h-[11px] w-2"><path d="M2 4l2-2 2 2zM2 7l2 2 2-2z" fill="#222" /><path d="M1 5.500h6" stroke="#aaa" strokeWidth=".6" /></svg>
      </button>
      <button aria-label={`${label} menu`} disabled={disabled} className="w-2 border-l border-[#ccc] bg-[#f0f0f0]">
        <svg viewBox="0 0 7 11" className="h-[11px] w-[7px]"><path d="M3 4l2 1.500L3 7z" fill="#222" /></svg>
      </button>
    </span>
  );
}

function PickButton({ label, two }: { label: string; two?: boolean }) {
  return (
    <button aria-label={label} className="flex h-[14px] w-4 shrink-0 items-center justify-center border border-[#bdbdbd] bg-[#e1e1e1]">
      <svg viewBox="0 0 12 12" className="h-3 w-3">
        <path d="M2.500 1.500l3.500 3M6 1L3 4.500" stroke="#cf4444" strokeWidth="1.200" />
        <path d="M5 3l.5 7.500 1.700-1.700 1.300 2.700 1-.6L8.400 8.300h2z" fill="#fff" stroke="#666" strokeWidth=".8" />
        {two && <path d="M1 7h2v2H1v2h2.500" stroke="#222" fill="none" />}
      </svg>
    </button>
  );
}

function SchemePicture() {
  return (
    <svg viewBox="25 73 442 612" className="h-[204px] w-full" fontFamily="'Liberation Sans', Arial, sans-serif">
      <g stroke="none" fontWeight="bold" fontSize="20">
        <path d="M60 170l60-21v72l-60 20z" fill="#d3d3e2" />
        <text x="38" y="183" fill="#3fae3a">Y</text>
        <text x="193" y="170" fill="#e03030">X</text>
        <text x="113" y="240" fill="#223a8c">Z</text>
      </g>
      <path d="M120 149l-50 16" stroke="#3fae3a" strokeWidth="3" /><path d="M58 170l16-10 3 10z" fill="#3fae3a" />
      <path d="M120 149l60 8" stroke="#e03030" strokeWidth="2" /><path d="M188 158l-15-6v10z" fill="#e03030" />
      <path d="M120 149v60" stroke="#223a8c" strokeWidth="3" /><path d="M120 221l-5-14h10z" fill="#223a8c" />
      <circle cx="120" cy="149" r="5" fill="#8b1660" />

      <g fill="none" stroke="#2a9ad0" strokeWidth="2.500">
        <path d="M322 136l92-18v88l-108 15zM322 136l68-24 24 6M306 221l76-24 32 9M322 136l28 22 64-40M350 158l64-30M316 165l24 4M312 200l22 6M330 186l84-12M390 112v60M306 221l42 8 66-23M350 158l-10 60M414 118l-40 55 40 33" />
      </g>
      <path d="M326 162l40 6" stroke="#0873c4" strokeWidth="6" /><path d="M380 171l-22-12v22z" fill="#0873c4" />
      <Dots pts={[[414, 117], [346, 230]]} r={6} fill="#0873c4" />
      <g fill="#2a62b8" fontSize="19" fontWeight="bold">
        <text x="395" y="106">P<tspan fontSize="14" dy="3">1</tspan></text>
        <text x="316" y="240">P<tspan fontSize="14" dy="3">2</tspan></text>
        <text x="425" y="122" fill="#3a2a78" fontWeight="normal">1</text>
        <text x="356" y="235" fill="#3a2a78" fontWeight="normal">2</text>
      </g>

      <path d="M84 278l128 132L85 620z" fill="#efe9df" />
      <path d="M84 278l134-48 196 205-133 47z" fill="#e4e4e4" stroke="#555" strokeWidth="2.500" />
      <path d="M218 403l196 31-133 220-196-34z" fill="#f4f4f4" stroke="#555" strokeWidth="2.500" />
      <path d="M281 482l133-48-196-31-6 6z" fill="#e9e9e9" stroke="#555" strokeWidth="2.500" />
      <g fill="none" stroke="#f2a86c" strokeWidth="3" strokeDasharray="6 6">
        <path d="M218 230l197 33v342l-134 48V482M84 278l197 34 134-49M218 571l197 34M281 312v170" />
        <path d="M84 278v342l134-49V230" stroke="#e9745f" />
      </g>
      <path d="M187 562l127-71M239 477l22 98" stroke="#444" strokeWidth="2.500" />

      <g fill="none" stroke="#59a6dc" strokeWidth="2.500">
        <path d="M118 307l67-24v88l-67 24zM118 307l67 64M118 395l67-112M313 342l67-25v88l-67 24zM313 342l67 63M313 429l67-112M168 317l168 80M234 293l33 127" />
      </g>
      <g fill="none" stroke="#2fb9c9" strokeWidth="4" strokeDasharray="4 5">
        <path d="M185 283l195 34M118 307l195 35M185 371l195 34M118 395l195 34" />
      </g>
      <path d="M168 317l66-24 102 103-69 24z" fill="none" stroke="#0873c4" strokeWidth="6" strokeDasharray="9 5" />
      <path d="M290 297l-22 36" stroke="#0873c4" strokeWidth="7" /><path d="M259 347l3-30 21 13z" fill="#0873c4" />
      <path d="M249 356l-30-32" stroke="#3fae3a" strokeWidth="3" />
      <path d="M249 356l-42 14" stroke="#e03030" strokeWidth="3" />
      <path d="M249 356l-11 34" stroke="#223a8c" strokeWidth="3" />
      <g fill="#29b5c6"><path d="M180 278h10v10h-10zM180 366h10v10h-10zM113 302h10v10h-10zM113 390h10v10h-10z" /></g>
      <Dots pts={[[234, 293], [168, 317], [336, 397], [267, 420]]} r={6} fill="#0873c4" />
      <g fontSize="19" fill="#3a2a78">
        <text x="154" y="272">1(X,Y,Z)</text>
        <text x="82" y="418">2(X,Y,Z)</text>
        <text x="206" y="322" fill="#3fae3a" fontWeight="bold">y</text>
        <text x="192" y="380" fill="#e03030" fontWeight="bold">x</text>
        <text x="238" y="398" fontWeight="bold">z</text>
      </g>
    </svg>
  );
}

function DirectionPicture() {
  return (
    <svg viewBox="25 48 442 195" className="h-[65px] w-full" fontFamily="'Liberation Sans', Arial, sans-serif">
      <path d="M201 149l22 42M285 85l30 53" stroke="#bfe0e6" strokeWidth="3" />
      <path d="M176 105l92-54 17 34-94 52z" fill="#dce9f2" stroke="#2a86c0" strokeWidth="3" />
      <path d="M199 92l13 27M222 79l13 27M245 65l13 27" stroke="#2a86c0" strokeWidth="3" />
      {[[191, 137], [214, 124], [238, 110], [261, 97], [284, 84]].map(([x, y]) => <path key={x} d="M0 0l-13-9 10-7z" transform={`translate(${x} ${y})`} fill="#0873c4" />)}
      <path d="M155 173L335 68" stroke="#3b4a9c" strokeWidth="6" />
      <Dots pts={[[155, 173], [335, 68]]} r={6} fill="#e23030" />
      <path d="M182 214L360 113" stroke="#555" strokeWidth="2.500" />
      <path d="M223 191l92-53" stroke="#2a8fd0" strokeWidth="5" />
      <path d="M178 217l14-2-6-9zM361 112l-14 2 7 9z" fill="#111" stroke="#111" strokeWidth="3" />
      <path d="M163 190l35-18" stroke="#888" strokeWidth="3" /><path d="M163 190l22 36" stroke="#4a2a78" strokeWidth="4" />
      <circle cx="163" cy="190" r="5" fill="#a0204a" />
      <text x="190" y="236" fontSize="20" fontWeight="bold" fill="#3a2a78">z</text>
    </svg>
  );
}

function LoadDialog() {
  const dirs: [string, string[], string][] = [
    ["Local\nrelated to true area:", ["x", "y", "z"], "z"],
    ["Global\nrelated to true area:", ["XL", "YL", "ZL"], ""],
    ["Global\nrelated to projected\narea:", ["XP", "YP", "ZP"], ""],
  ];
  return (
    <div
      role="dialog"
      aria-label="Edit Free Rectangular Load"
      className="absolute top-[120px] right-0 flex w-[400px] flex-col border border-[#8a8f96] bg-[#f0f0f0] font-['Liberation_Sans',Arial,sans-serif] text-[7px] leading-[8px] text-[#222] shadow-[0_2px_6px_rgba(0,0,0,0.35)]"
    >
      <header className="flex h-4 items-center bg-white pr-[5px] pl-0.5">
        <h1 className="flex-1 font-['Open_Sans','Noto_Sans',sans-serif] text-[7px] text-black">Edit Free Rectangular Load</h1>
        <button aria-label="Close dialog">
          <svg viewBox="0 0 8 8" className="h-2 w-2"><path d="M1 1l6 6M7 1L1 7" stroke="#222" /></svg>
        </button>
      </header>
      <div className="flex gap-1 pt-[5px] pr-1 pl-[5px]">
        <div className="flex w-[238px] shrink-0 flex-col gap-[7px]">
          <div className="flex gap-1.5">
            <Group title="No." className="h-[29px] w-[61px]">
              <input aria-label="No." readOnly value="1" className="mx-px mt-0.5 h-[13px] border border-[#a5a5a5] bg-[#f0f0f0] px-1 text-[#666]" />
            </Group>
            <Group title="On Surfaces No." className="h-[29px] flex-1">
              <div className="flex gap-0.5 px-px pt-0.5">
                <div className="flex h-[13px] flex-1 items-center border border-[#0078d7] bg-white pl-[3px]">
                  <input aria-label="On Surfaces No." defaultValue="5" className="w-[5px] bg-[#0078d7] text-white outline-none" />
                </div>
                <PickButton label="Pick surfaces" />
              </div>
            </Group>
          </div>
          <div className="flex gap-1">
            <div className="flex w-[124px] flex-col gap-[7px]">
              <Group title="Projection Plane of Load" className="h-[52px]">
                <div className="flex flex-col pt-[3px] pl-px">
                  <Radio name="plane" label="XY Plane" />
                  <Radio name="plane" label="YZ Plane" checked />
                  <Radio name="plane" label="XZ Plane" />
                </div>
              </Group>
              <Group title="Load Distribution and Magnitude" className="h-[87px]">
                <div className="flex flex-col pt-[3px] pl-px">
                  <Radio name="dist" label="Uniform" />
                  <Radio name="dist" label="Linear in Y" />
                  <Radio name="dist" label="Linear in Z" checked />
                </div>
                <div className="flex flex-col gap-0.5 pt-[5px] pl-px">
                  {[["1", "-10.00"], ["2", "-5.00"]].map(([n, v]) => (
                    <div key={n} className="flex items-center gap-[3px]">
                      <span className="w-[13px]">p<span className="text-[6px]">{n}</span> :</span>
                      <Spinner label={`p${n}`} value={v} />
                      <span>[kN/m<sup className="text-[5px]">2</sup> ]</span>
                    </div>
                  ))}
                </div>
              </Group>
            </div>
            <Group title="Load Direction" className="flex-1">
              {dirs.map(([text, opts, sel], i) => (
                <div key={i} className={`mr-1 ml-px flex h-11 justify-between pt-[3px] pr-3 ${i ? "border-t border-[#a6a6a6]" : ""}`}>
                  <p className="pt-0.5 whitespace-pre">{text}</p>
                  <div className="flex w-[19px] flex-col">
                    {opts.map((o) => <Radio key={o} name="direction" label={o} checked={o === sel} />)}
                  </div>
                </div>
              ))}
            </Group>
          </div>
          <Group title="Load Position" className="h-[72px]">
            <div className="grid grid-cols-[16px_58px_55px_32px_53px] items-center gap-y-[2px] pt-[3px]">
              <span />
              <span className="pl-3">Y&nbsp; [m]</span>
              <span className="pl-3">Z&nbsp; [m]</span>
              <span />
              <span className="pl-3 text-[#a5a5a5]">X&nbsp; [m]</span>
              <span className="pl-px">1 :</span>
              <Spinner label="Y1" value="1.581" />
              <Spinner label="Z1" value="0.000" />
              <PickButton label="Pick point 1" />
              <Spinner label="X" value="" disabled />
              <span className="pl-px">2 :</span>
              <Spinner label="Y2" value="-1.581" />
              <Spinner label="Z2" value="-2.000" />
              <PickButton label="Pick point 2" />
              <span />
              <span className="col-span-3" />
              <PickButton label="Pick both points" two />
            </div>
          </Group>
          <Group title="Comment" className="h-[30px]">
            <div className="flex items-center gap-0.5 px-px pt-0.5">
              <div className="grid flex-1 items-center">
                <select aria-label="Comment" className="col-start-1 row-start-1 h-[13px] appearance-none border border-[#8e8e8e] bg-white" />
                <svg viewBox="0 0 6 4" className="pointer-events-none col-start-1 row-start-1 mr-[3px] h-1 w-1.5 justify-self-end"><path d="M.5.5L3 3 5.500.5" fill="none" stroke="#444" /></svg>
              </div>
              <button aria-label="Comment library" className="flex h-[14px] w-4 items-center justify-center border border-[#bdbdbd] bg-[#e1e1e1]">
                <svg viewBox="0 0 12 10" className="h-2.5 w-3"><path d="M1 1.500h7v4H1zM2.500 3h7v4h-7zM4 4.500h7v4H4z" fill="#c9bb84" stroke="#5f5636" strokeWidth=".8" /></svg>
              </button>
            </div>
          </Group>
        </div>
        <div className="flex min-w-0 flex-1 flex-col gap-[7px]">
          <div className="border-t border-l border-[#a0a0a0] bg-linear-to-bl from-[#fbf1d4] via-[#fdf9ec] to-white"><SchemePicture /></div>
          <div className="flex h-[83px] flex-col border-t border-l border-[#a0a0a0] bg-white">
            <div className="relative bg-linear-to-bl from-[#fbf1d4] via-[#fdf9ec] to-white pt-[7px]">
              <DirectionPicture />
              <p className="absolute top-px left-px">Load Direction 'z'</p>
            </div>
          </div>
        </div>
      </div>
      <div className="mx-[5px] mt-1 border-t border-[#a6a6a6]" />
      <footer className="flex items-center gap-1.5 pt-1 pr-1 pb-[5px] pl-[5px]">
        <button aria-label="Help" className="flex h-[14px] w-4 items-center justify-center border border-[#bdbdbd] bg-[#e1e1e1]">
          <svg viewBox="0 0 10 10" className="h-2.5 w-2.5"><circle cx="5" cy="5" r="4.300" fill="#f4f6fa" stroke="#4a5878" strokeWidth=".9" /><path d="M3.500 4q0-1.700 1.600-1.700T6.600 4Q6.600 5 5 5.600V6.500M5 7.300v1" fill="none" stroke="#27459a" strokeWidth="1.200" /></svg>
        </button>
        <button aria-label="Units and decimal places" className="flex h-[14px] w-4 items-center justify-center border border-[#bdbdbd] bg-[#e1e1e1]">
          <svg viewBox="0 0 12 12" className="h-3 w-3"><path d="M1 1h10v4H1z" fill="#5cbf5c" /><path d="M1 3h10" stroke="#2d8a2d" strokeWidth=".7" /><path d="M1.500 7h2v3h-2zM6 7h2v3H6zM9 7h2v3H9z" fill="none" stroke="#222" strokeWidth=".9" /><path d="M4.200 10h1M1 11.500h10" stroke="#222" strokeWidth=".8" /></svg>
        </button>
        <button className="ml-auto h-[14px] w-[47px] border border-[#0078d7] bg-[#e1e1e1] outline outline-[#0078d7]/40">OK</button>
        <button className="h-[14px] w-[47px] border border-[#adadad] bg-[#e1e1e1]">Cancel</button>
      </footer>
    </div>
  );
}

/* ---------- red call-outs above the whole screen ---------- */

function Callouts() {
  return (
    <svg viewBox="0 0 760 570" className="pointer-events-none absolute top-0 left-0 h-[570px] w-[760px] drop-shadow-[2px_2px_1px_rgba(0,0,0,0.35)]">
      <g fill="none" stroke="#d01414" strokeWidth="1.500">
        <path d="M3.500 74.500h71v12h-71zM15.500 234.500h78v12h-78zM39.500 325.500h71v12h-71zM38.500 556.500h36v13h-36z" />
      </g>
      <g fill="none" stroke="#c00a0a" strokeWidth="1.800">
        <path d="M40 88v140" />
        <path d="M43 250l23 67" />
        <path d="M78 340l136 75" />
        <path d="M55 555C30 515 22 440 15 372 8 300 7 200 10 98" />
      </g>
      <path d="M40 234l-4.500-9h9zM69 325l-7-8 8.500-3zM222 419l-12.500-2.500 5-8zM10.500 90l-4.500 10h9z" fill="#c00a0a" />
    </svg>
  );
}

export default function App() {
  return (
    <div className="relative flex h-screen flex-col overflow-hidden bg-[#cfd3db] font-['Open_Sans','Noto_Sans',sans-serif] text-[7px] leading-[10px]">
      <nav className="flex h-[17px] shrink-0 items-center border-t border-[#eceef2] text-[#41485a]">
        <Grip />
        <div className="flex items-center gap-2.5 pl-[5px]">
          {menu.map(([a, b, c]) => (
            <button key={b + c} className="whitespace-nowrap">{a}<u>{b}</u>{c}</button>
          ))}
        </div>
      </nav>
      <div className="flex h-[16px] shrink-0 items-center overflow-hidden bg-linear-to-b from-[#f0f2f7] to-[#d9dde6]">
        <Grip />
        <Tools items={rowOneLeft} />
        <div className="mr-1 grid w-[136px] shrink-0 items-center">
          <select aria-label="Load case" className="col-start-1 row-start-1 h-3 appearance-none bg-white pl-[3px] text-[7px] text-black">
            <option>LC1</option>
          </select>
          <span className="pointer-events-none col-start-1 row-start-1 flex h-3 w-2 items-center justify-center justify-self-end bg-[#dfe3eb]">
            <svg viewBox="0 0 4 2" className="h-[2px] w-1"><path d="M0 0h4L2 2z" fill="#555c6b" /></svg>
          </span>
        </div>
        <Tools items={rowOneRight} />
      </div>
      <div className="flex h-[17px] shrink-0 items-center overflow-hidden border-b border-[#a9afbb] bg-linear-to-b from-[#f0f2f7] to-[#d9dde6]">
        <Grip />
        <Tools items={rowTwo} wide />
      </div>
      <main className="flex min-h-0 flex-1 bg-[#c3c9d4]">
        <Navigator />
        <div className="ml-[3px] flex min-w-0 flex-1 flex-col bg-[#9aa1ad] pb-px">
          <ChildWindow><ViewOne /></ChildWindow>
          <ChildWindow active><ViewTwo /></ChildWindow>
        </div>
      </main>
      <LoadDialog />
      <Callouts />
    </div>
  );
}
